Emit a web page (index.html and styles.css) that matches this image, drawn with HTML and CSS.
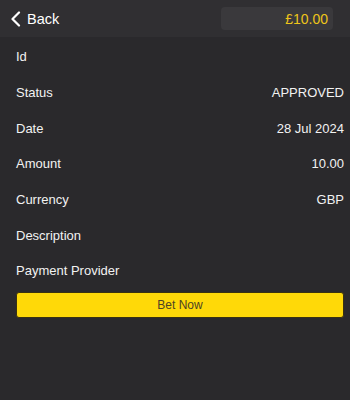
FILE: index.html
```html
<!DOCTYPE html>
<html>
<head>
<meta charset="utf-8">
<link rel="stylesheet" href="styles.css">
</head>
<body>
<header class="topbar">
  <div class="back">
    <svg class="chev" width="12" height="16" viewBox="0 0 12 16"><path d="M9 1.5 L2.5 8 L9 14.5" fill="none" stroke="#fff" stroke-width="2.2" stroke-linecap="round" stroke-linejoin="round"/></svg>
    <span>Back</span>
  </div>
  <div class="balance">£10.00</div>
</header>
<main class="details">
  <div class="row"><span>Id</span><span></span></div>
  <div class="row"><span>Status</span><span>APPROVED</span></div>
  <div class="row"><span>Date</span><span>28 Jul 2024</span></div>
  <div class="row"><span>Amount</span><span>10.00</span></div>
  <div class="row"><span>Currency</span><span>GBP</span></div>
  <div class="row"><span>Description</span><span></span></div>
  <div class="row"><span>Payment Provider</span><span></span></div>
  <button class="bet">Bet Now</button>
</main>
</body>
</html>
```
FILE: styles.css
```css
html, body {
  margin: 0;
  padding: 0;
  background: #2a292c;
  font-family: "Liberation Sans", Arial, sans-serif;
  color: #f2f2f2;
}
.topbar {
  height: 37px;
  background: #302f32;
  display: flex;
  align-items: center;
  justify-content: space-between;
  padding: 0 17px 0 10px;
}
.back {
  display: flex;
  align-items: center;
  gap: 5px;
  font-size: 14.5px;
  color: #fff;
}
.chev { display: block; }
.balance {
  width: 107px;
  height: 23px;
  background: #3a393c;
  border-radius: 4px;
  color: #eec51a;
  font-size: 14px;
  display: flex;
  align-items: center;
  justify-content: flex-end;
  padding-right: 5px;
}
.details {
  padding: 2px 6px 0 16px;
}
.row {
  height: 35.7px;
  display: flex;
  align-items: center;
  justify-content: space-between;
  font-size: 13px;
}
.bet {
  display: block;
  width: 328px;
  height: 26px;
  margin-top: 3px;
  background: #ffd908;
  border: 1px solid #3a3210;
  border-radius: 3px;
  color: #4d4424;
  font-family: "Liberation Sans", Arial, sans-serif;
  font-size: 12px;
}
```
